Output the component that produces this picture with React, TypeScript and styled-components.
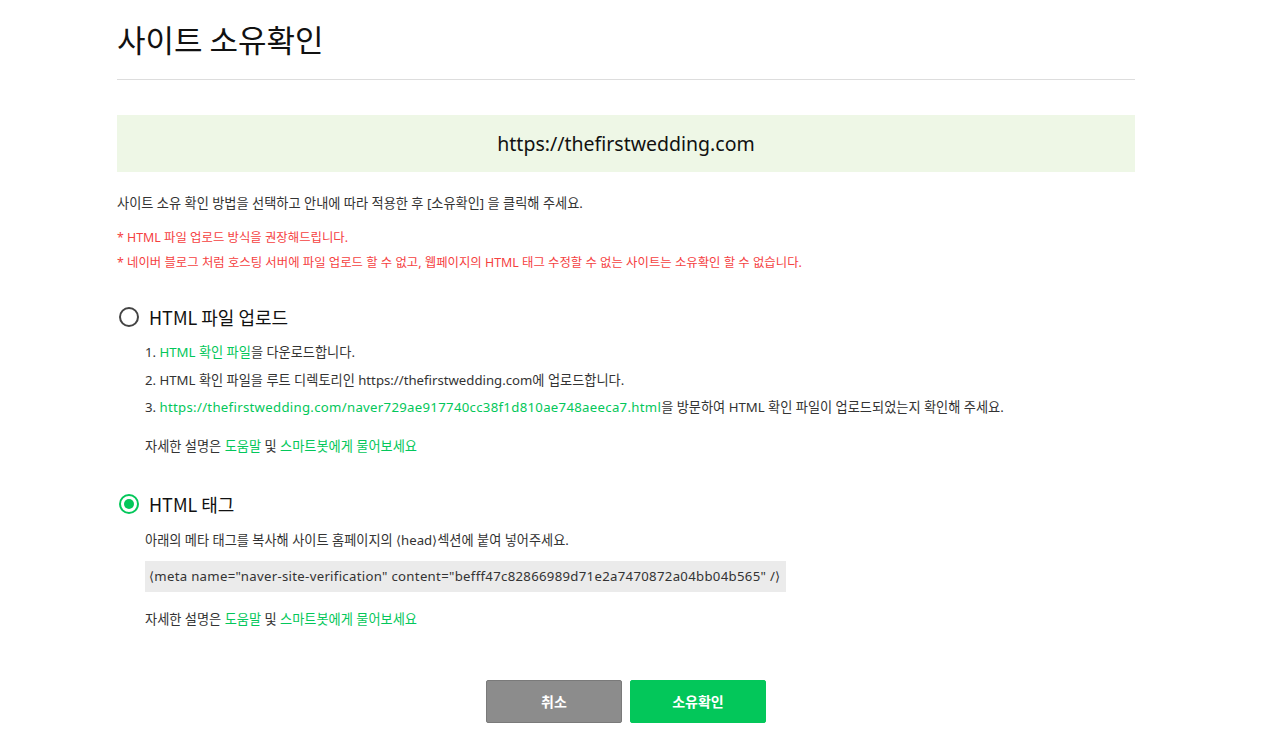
import React from "react";
import styled, { createGlobalStyle } from "styled-components";

const Global = createGlobalStyle`
  html, body { margin: 0; padding: 0; background: #fff; }
  body { font-family: "Noto Sans", "Noto Sans CJK KR", sans-serif; color: #333; }
`;

const Page = styled.div`
  width: 1018px;
  margin: 0 0 0 117px;
  padding-top: 16px;
`;

const Title = styled.h1`
  margin: 0;
  font-family: "Noto Sans CJK KR", sans-serif;
  font-size: 31px;
  font-weight: 400;
  line-height: 46px;
  color: #111;
  padding-bottom: 17px;
  border-bottom: 1px solid #ddd;
`;

const UrlBox = styled.div`
  margin-top: 35px;
  height: 57px;
  background: #eef7e6;
  display: flex;
  align-items: center;
  justify-content: center;
  font-family: "Noto Sans", sans-serif;
  font-size: 19.5px;
  color: #111;
`;

const Desc = styled.p`
  margin: 20px 0 0;
  font-size: 13.2px;
  line-height: 22px;
  color: #333;
`;

const Notes = styled.div`
  margin-top: 11px;
  display: flex;
  flex-direction: column;
`;

const Note = styled.p`
  margin: 0;
  font-size: 12.4px;
  line-height: 25px;
  color: #f5413f;
`;

const Option = styled.section<{ $top: number }>`
  margin-top: ${(p) => p.$top}px;
`;

const OptionHead = styled.label`
  display: flex;
  align-items: center;
  gap: 10px;
  height: 30px;
  font-family: "Noto Sans CJK KR", sans-serif;
  font-size: 18px;
  color: #111;
`;

const Radio = styled.span<{ $checked?: boolean }>`
  box-sizing: border-box;
  width: 20px;
  height: 20px;
  margin-left: 2px;
  border-radius: 50%;
  border: 2px solid ${(p) => (p.$checked ? "#03c75a" : "#444")};
  display: flex;
  align-items: center;
  justify-content: center;
  &::after {
    content: "";
    display: ${(p) => (p.$checked ? "block" : "none")};
    width: 10px;
    height: 10px;
    border-radius: 50%;
    background: #03c75a;
  }
`;

const Body = styled.div`
  padding-left: 28px;
`;

const Steps = styled.ol`
  list-style: none;
  margin: 7px 0 0;
  padding: 0;
`;

const Step = styled.li`
  font-size: 13.2px;
  line-height: 27.5px;
  color: #333;
`;

const Link = styled.span<{ $wide?: boolean }>`
  color: #03c75a;
  letter-spacing: ${(p) => (p.$wide ? "0.3px" : "normal")};
`;

const Help = styled.p<{ $top: number }>`
  margin: ${(p) => p.$top}px 0 0;
  font-size: 13.2px;
  line-height: 22px;
  color: #333;
`;

const Code = styled.div`
  margin-top: 10px;
  display: inline-flex;
  align-items: center;
  height: 31px;
  padding: 0 6px 0 4px;
  background: #ebebeb;
  font-size: 13.2px;
  letter-spacing: 0.3px;
  color: #333;
`;

const Buttons = styled.div`
  margin-top: 50px;
  display: flex;
  justify-content: center;
  gap: 8px;
`;

const Button = styled.button<{ $primary?: boolean }>`
  width: 136px;
  height: 43px;
  border-radius: 2px;
  border: 1px solid ${(p) => (p.$primary ? "#03c75a" : "#7a7a7a")};
  background: ${(p) => (p.$primary ? "#03c75a" : "#8c8c8c")};
  color: #fff;
  font-family: "Noto Sans CJK KR", sans-serif;
  font-size: 14px;
  font-weight: 700;
  cursor: pointer;
`;

export default function App() {
  return (
    <>
      <Global />
      <Page>
        <Title>사이트 소유확인</Title>
        <UrlBox>https://thefirstwedding.com</UrlBox>
        <Desc>사이트 소유 확인 방법을 선택하고 안내에 따라 적용한 후 [소유확인] 을 클릭해 주세요.</Desc>
        <Notes>
          <Note>* HTML 파일 업로드 방식을 권장해드립니다.</Note>
          <Note>* 네이버 블로그 처럼 호스팅 서버에 파일 업로드 할 수 없고, 웹페이지의 HTML 태그 수정할 수 없는 사이트는 소유확인 할 수 없습니다.</Note>
        </Notes>

        <Option $top={27}>
          <OptionHead>
            <Radio />
            HTML 파일 업로드
          </OptionHead>
          <Body>
            <Steps>
              <Step>
                1. <Link>HTML 확인 파일</Link>을 다운로드합니다.
              </Step>
              <Step>2. HTML 확인 파일을 루트 디렉토리인 https://thefirstwedding.com에 업로드합니다.</Step>
              <Step>
                3. <Link $wide>https://thefirstwedding.com/naver729ae917740cc38f1d810ae748aeeca7.html</Link>을 방문하여 HTML 확인 파일이 업로드되었는지 확인해 주세요.
              </Step>
            </Steps>
            <Help $top={13}>
              자세한 설명은 <Link>도움말</Link> 및 <Link>스마트봇에게 물어보세요</Link>
            </Help>
          </Body>
        </Option>

        <Option $top={32}>
          <OptionHead>
            <Radio $checked />
            HTML 태그
          </OptionHead>
          <Body>
            <Help $top={10}>아래의 메타 태그를 복사해 사이트 홈페이지의 ⟨head⟩섹션에 붙여 넣어주세요.</Help>
            <Code>⟨meta name="naver-site-verification" content="befff47c82866989d71e2a7470872a04bb04b565" /⟩</Code>
            <Help $top={16}>
              자세한 설명은 <Link>도움말</Link> 및 <Link>스마트봇에게 물어보세요</Link>
            </Help>
          </Body>
        </Option>

        <Buttons>
          <Button>취소</Button>
          <Button $primary>소유확인</Button>
        </Buttons>
      </Page>
    </>
  );
}
